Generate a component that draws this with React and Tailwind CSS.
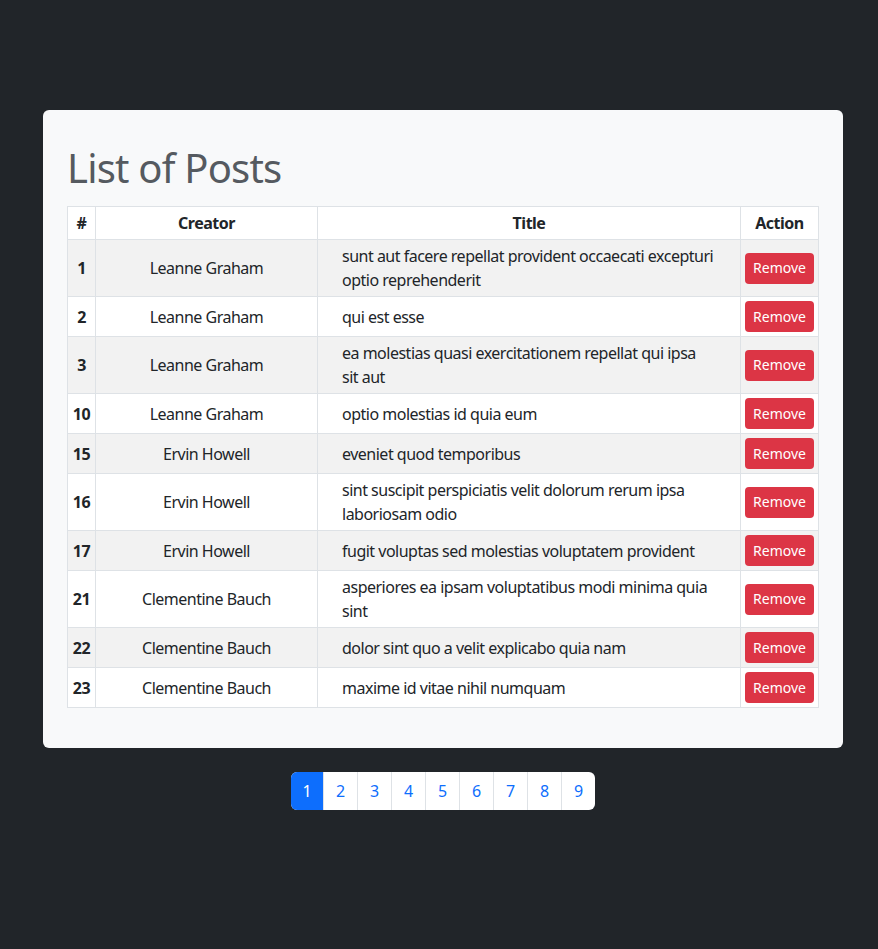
const posts = [
  { id: 1, creator: 'Leanne Graham', title: 'sunt aut facere repellat provident occaecati excepturi optio reprehenderit' },
  { id: 2, creator: 'Leanne Graham', title: 'qui est esse' },
  { id: 3, creator: 'Leanne Graham', title: 'ea molestias quasi exercitationem repellat qui ipsa sit aut' },
  { id: 10, creator: 'Leanne Graham', title: 'optio molestias id quia eum' },
  { id: 15, creator: 'Ervin Howell', title: 'eveniet quod temporibus' },
  { id: 16, creator: 'Ervin Howell', title: 'sint suscipit perspiciatis velit dolorum rerum ipsa laboriosam odio' },
  { id: 17, creator: 'Ervin Howell', title: 'fugit voluptas sed molestias voluptatem provident' },
  { id: 21, creator: 'Clementine Bauch', title: 'asperiores ea ipsam voluptatibus modi minima quia sint' },
  { id: 22, creator: 'Clementine Bauch', title: 'dolor sint quo a velit explicabo quia nam' },
  { id: 23, creator: 'Clementine Bauch', title: 'maxime id vitae nihil numquam' },
]

const pages = [1, 2, 3, 4, 5, 6, 7, 8, 9]

export default function App() {
  return (
    <div className="min-h-[949px] bg-[#212529] pt-[110px] font-['Noto_Sans',sans-serif] text-[#212529]">
      <div className="ml-[43px] w-[800px]">
        {/* card */}
        <div className="rounded-md bg-[#f8f9fa] px-6 pt-[34px] pb-10">
          <h1 className="mb-[14px] text-[40px] leading-[48px] tracking-[-0.8px] text-[#555a60]">List of Posts</h1>

          <table className="w-[751px] table-fixed border-collapse border border-[#dee2e6] bg-white text-base leading-6 tracking-[-0.5px]">
            <colgroup>
              <col className="w-[28px]" />
              <col className="w-[222px]" />
              <col className="w-[423px]" />
              <col className="w-[78px]" />
            </colgroup>
            <thead>
              <tr className="h-[33px]">
                <th className="border border-[#dee2e6] px-1 py-1 font-bold">#</th>
                <th className="border border-[#dee2e6] px-1 py-1 font-bold">Creator</th>
                <th className="border border-[#dee2e6] px-1 py-1 font-bold">Title</th>
                <th className="border border-[#dee2e6] px-1 py-1 font-bold">Action</th>
              </tr>
            </thead>
            <tbody>
              {posts.map((p, i) => (
                <tr key={p.id} className={i % 2 === 0 ? 'bg-[#f2f2f2]' : 'bg-white'}>
                  <td className="border border-[#dee2e6] px-1 py-1 text-center font-bold">{p.id}</td>
                  <td className="border border-[#dee2e6] px-1 py-1 text-center">{p.creator}</td>
                  <td className="border border-[#dee2e6] py-1 pl-6 pr-[26px]">{p.title}</td>
                  <td className="border border-[#dee2e6] px-1 py-1 text-center">
                    <button className="h-[31px] w-[69px] rounded bg-[#dc3545] text-sm tracking-normal text-white">Remove</button>
                  </td>
                </tr>
              ))}
            </tbody>
          </table>
        </div>

        {/* pagination */}
        <div className="mt-6 flex justify-center">
          <div className="flex overflow-hidden rounded-md bg-white">
            {pages.map((n) => (
              <span
                key={n}
                className={
                  n === 1
                    ? 'flex h-[38px] w-[32px] items-center justify-center bg-[#0d6efd] text-base text-white'
                    : 'flex h-[38px] w-[34px] items-center justify-center border-l border-[#dee2e6] text-base text-[#0d6efd]'
                }
              >
                {n}
              </span>
            ))}
          </div>
        </div>
      </div>
    </div>
  )
}
